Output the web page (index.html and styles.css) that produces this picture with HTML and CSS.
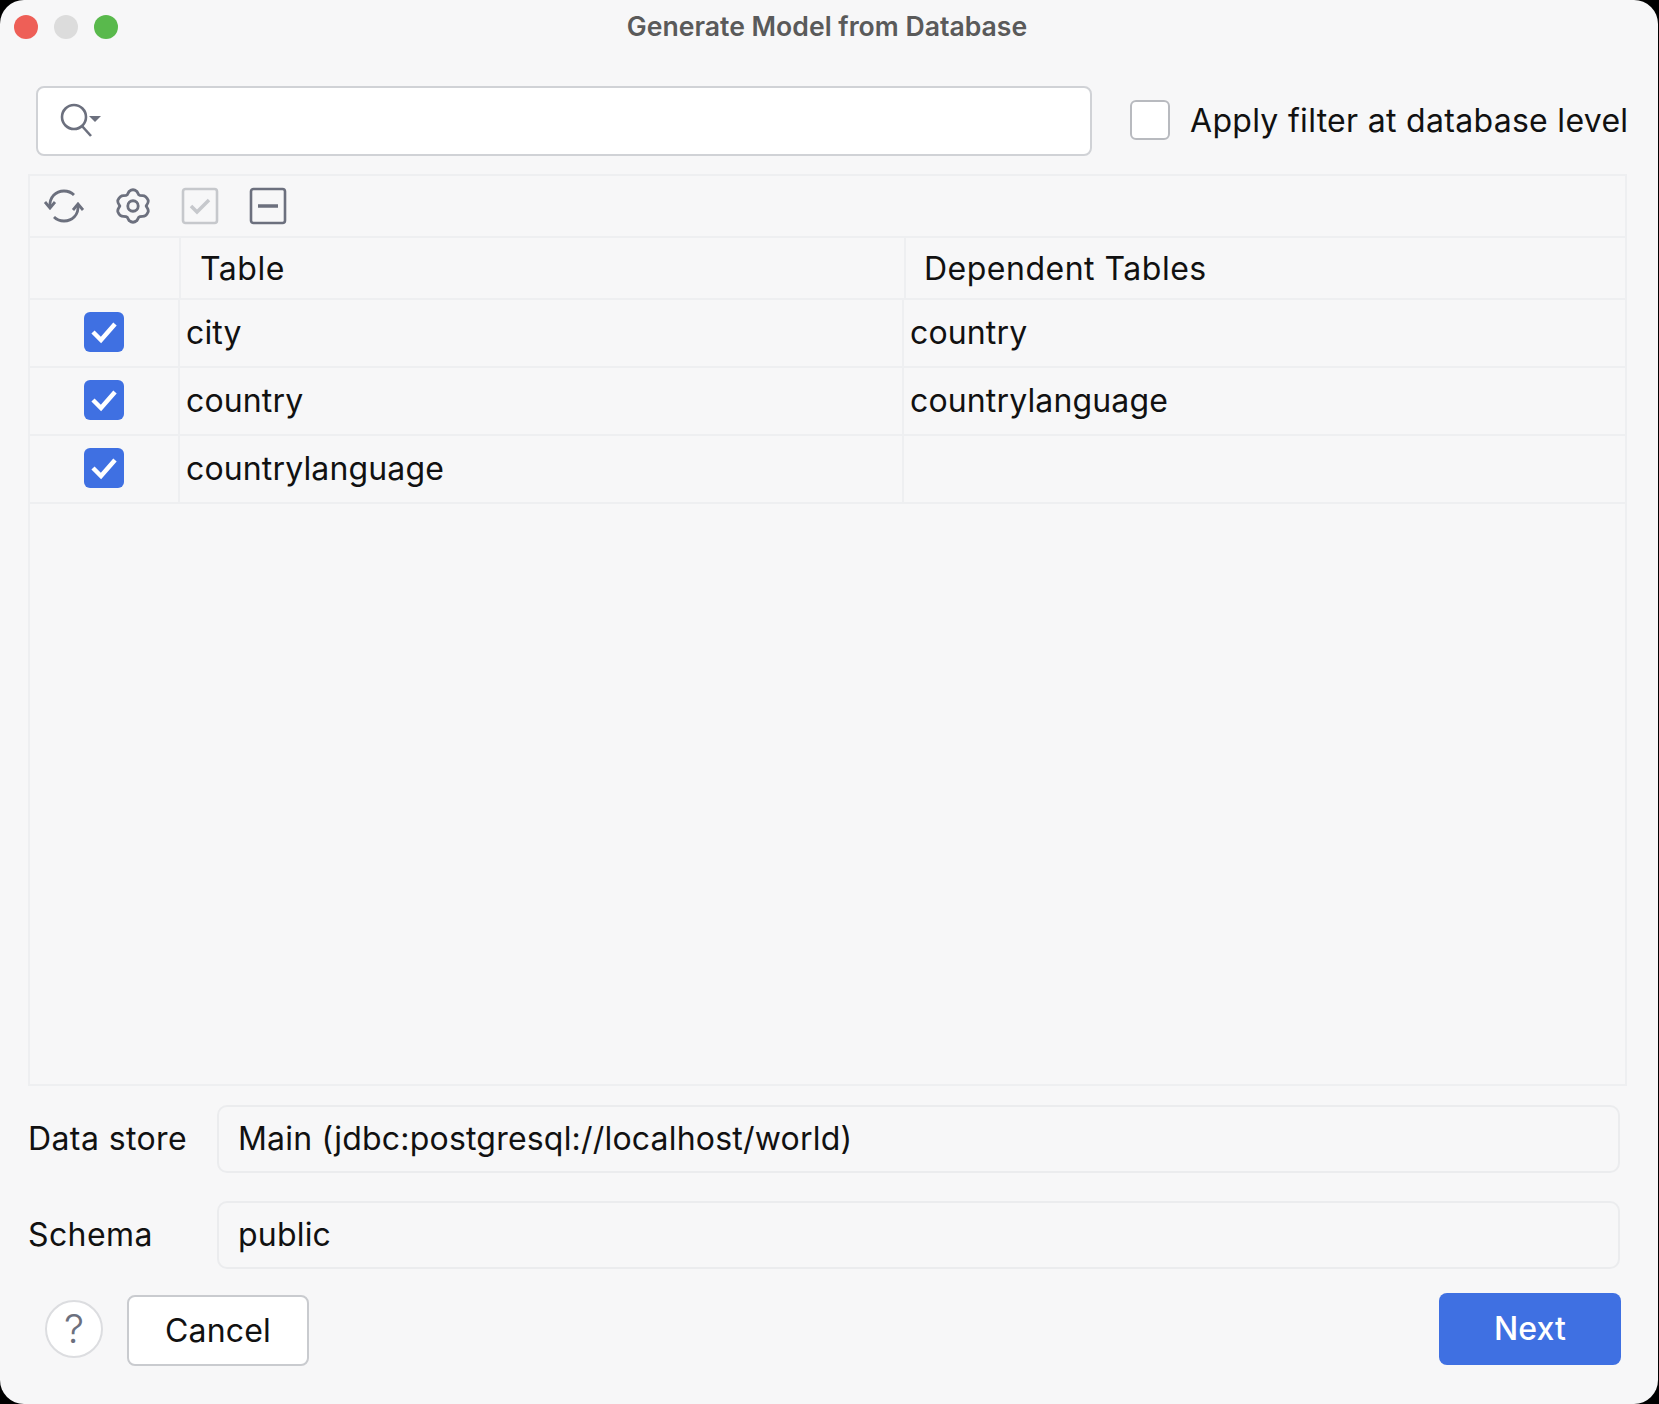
FILE: index.html
```html
<!DOCTYPE html>
<html lang="en">
<head>
    <meta charset="UTF-8">
    <title>Generate Model from Database</title>
    <link rel="stylesheet" href="styles.css">
</head>
<body>

<div class="window">
    <div class="titlebar">
        <div class="lights">
            <span class="light red"></span>
            <span class="light gray"></span>
            <span class="light green"></span>
        </div>
        <div class="title">Generate Model from Database</div>
        <div></div>
    </div>

    <div class="filter-row">
        <div class="search">
            <svg width="44" height="36" viewBox="0 0 44 36" fill="none" stroke="#6c707e" stroke-width="2.6">
                <circle cx="14" cy="14" r="12"/>
                <path d="M22 23l9 10"/>
                <path d="M29 13h12l-6 6z" fill="#6c707e" stroke="none"/>
            </svg>
        </div>
        <label class="apply-filter">
            <span class="checkbox"></span>
            Apply filter at database level
        </label>
    </div>

    <div class="panel">
        <div class="toolbar">
            <!-- refresh -->
            <svg class="tool" width="42" height="38" viewBox="0 0 42 38" fill="none" stroke="#6c707e" stroke-width="2.8">
                <path d="M7 20C6 10 13 4 21 4c5 0 8 2 10 4"/>
                <path d="M35 18c1 10-6 16-14 16-5 0-8-2-10-4"/>
                <path d="M2 15l5 6 5-6"/>
                <path d="M30 23l5-6 5 6"/>
            </svg>
            <!-- settings -->
            <svg class="tool" width="36" height="38" viewBox="-1 -1 38 40" fill="none" stroke="#6c707e" stroke-width="3" stroke-linejoin="round">
                <path d="M14 3.5c2.5-2 5.5-2 8 0l2 3.5c1 1 2.5 1 4 1 3 0 5 2.5 6 5 .5 2-.5 3.5-1.5 5-.5 .5-.5 1.5 0 2 1 1.5 2 3 1.5 5-1 2.5-3 5-6 5-1.5 0-3 0-4 1l-2 3.5c-2.5 2-5.5 2-8 0l-2-3.5c-1-1-2.5-1-4-1-3 0-5-2.5-6-5-.5-2 .5-3.5 1.5-5 .5-.5 .5-1.5 0-2-1-1.5-2-3-1.5-5 1-2.5 3-5 6-5 1.5 0 3 0 4-1z"/>
                <circle cx="18" cy="19" r="5.5"/>
            </svg>
            <!-- select all, disabled -->
            <svg class="tool" width="38" height="38" viewBox="0 0 38 38" fill="none" stroke="#c6c8cc" stroke-width="2.6">
                <rect x="2" y="2" width="34" height="34" rx="2.5"/>
                <path d="M10 19l6 6 12-12" stroke-width="3.5"/>
            </svg>
            <!-- unselect all -->
            <svg class="tool" width="38" height="38" viewBox="0 0 38 38" fill="none" stroke="#6c707e" stroke-width="2.6">
                <rect x="2" y="2" width="34" height="34" rx="2.5"/>
                <path d="M9 19h20" stroke-width="3.5"/>
            </svg>
        </div>

        <div class="row head">
            <div class="cell"></div>
            <div class="cell">Table</div>
            <div class="cell">Dependent Tables</div>
        </div>
        <div class="row">
            <div class="cell check-cell"><span class="checked"><svg width="40" height="40" viewBox="0 0 40 40" fill="none" stroke="#fff" stroke-width="4.5"><path d="M9 20l8 8 14-16"/></svg></span></div>
            <div class="cell">city</div>
            <div class="cell">country</div>
        </div>
        <div class="row">
            <div class="cell check-cell"><span class="checked"><svg width="40" height="40" viewBox="0 0 40 40" fill="none" stroke="#fff" stroke-width="4.5"><path d="M9 20l8 8 14-16"/></svg></span></div>
            <div class="cell">country</div>
            <div class="cell">countrylanguage</div>
        </div>
        <div class="row">
            <div class="cell check-cell"><span class="checked"><svg width="40" height="40" viewBox="0 0 40 40" fill="none" stroke="#fff" stroke-width="4.5"><path d="M9 20l8 8 14-16"/></svg></span></div>
            <div class="cell">countrylanguage</div>
            <div class="cell"></div>
        </div>
    </div>

    <div class="field">
        <div class="field-label">Data store</div>
        <div class="field-value">Main (jdbc:postgresql://localhost/world)</div>
    </div>
    <div class="field second">
        <div class="field-label">Schema</div>
        <div class="field-value">public</div>
    </div>

    <div class="footer">
        <div class="help">?</div>
        <button class="cancel-btn">Cancel</button>
        <button class="next-btn">Next</button>
    </div>
</div>

</body>
</html>
```

FILE: styles.css
```css
body {
    margin: 0;
    background-color: #000;
    font-family: Inter, "Noto Sans", sans-serif;
    font-size: 32px;
    letter-spacing: 0.14px;
    color: #111;
}

.window {
    width: 1658px;
    height: 1404px;
    box-sizing: border-box;
    padding: 0 31px 0 28px;
    background-color: #f7f7f8;
    border-radius: 24px;
    overflow: hidden;
}

.titlebar {
    display: grid;
    grid-template-columns: 1fr auto 1fr;
    align-items: center;
    height: 54px;
    margin: 0 -27px 0 -28px;
}

.lights {
    display: flex;
    gap: 16px;
    padding-left: 14px;
}

.light {
    width: 24px;
    height: 24px;
    border-radius: 50%;
}

.red { background-color: #ee5f57; }
.gray { background-color: #dcdcdc; }
.green { background-color: #59b94c; }

.title {
    padding-bottom: 2px;
    font-size: 26.6px;
    font-weight: 600;
    letter-spacing: 0;
    color: #5a5a5a;
}

.filter-row {
    display: flex;
    align-items: center;
    margin-top: 32px;
    padding-left: 8px;
}

.search {
    display: flex;
    flex: none;
    align-items: center;
    box-sizing: border-box;
    width: 1056px;
    height: 70px;
    padding-left: 22px;
    background-color: #fff;
    border: 2px solid #d0d2d6;
    border-radius: 8px;
}

.apply-filter {
    display: flex;
    align-items: center;
    gap: 20px;
    margin-left: 38px;
    padding-bottom: 2px;
    letter-spacing: 0.3px;
    white-space: nowrap;
}

.checkbox {
    width: 40px;
    height: 40px;
    box-sizing: border-box;
    background-color: #fff;
    border: 2px solid #b8babf;
    border-radius: 6px;
}

.panel {
    height: 912px;
    box-sizing: border-box;
    margin-top: 18px;
    border: 2px solid #eeeff1;
}

.toolbar {
    display: flex;
    align-items: center;
    gap: 30px;
    height: 60px;
    padding-left: 13px;
    border-bottom: 2px solid #eeeff1;
}

.row {
    display: grid;
    grid-template-columns: 150px 724px 1fr;
    height: 68px;
    box-sizing: border-box;
    border-bottom: 2px solid #eeeff1;
}

.cell {
    display: flex;
    align-items: center;
    padding: 0 0 2px 6px;
    border-right: 2px solid #eeeff1;
}

.cell:last-child {
    border-right: none;
}

.head {
    grid-template-columns: 151px 725px 1fr;
    height: 62px;
    letter-spacing: 0.5px;
}

.head .cell {
    padding: 0 0 0 19px;
}

.head .cell:last-child {
    padding-left: 18px;
}

.check-cell {
    justify-content: center;
    padding-left: 0;
}

.checked {
    display: flex;
    width: 40px;
    height: 40px;
    background-color: #3f70e2;
    border-radius: 6px;
}

.field {
    display: flex;
    align-items: center;
    margin-top: 19px;
}

.field.second {
    margin-top: 28px;
}

.field-label {
    width: 189px;
    padding-bottom: 2px;
    letter-spacing: 0.4px;
}

.field-value {
    display: flex;
    align-items: center;
    box-sizing: border-box;
    width: 1403px;
    height: 68px;
    padding: 0 0 2px 19px;
    border: 2px solid #ebecee;
    border-radius: 10px;
    letter-spacing: 0.2px;
}

.footer {
    display: flex;
    align-items: center;
    margin-top: 22px;
    padding: 0 6px 0 17px;
}

.help {
    width: 58px;
    height: 58px;
    box-sizing: border-box;
    margin-right: 24px;
    background-color: #fff;
    border: 2px solid #dcdde0;
    border-radius: 50%;
    color: #6c707e;
    line-height: 54px;
    text-align: center;
    font-size: 40px;
    font-weight: 300;
}

.cancel-btn {
    width: 182px;
    height: 71px;
    margin-top: 4px;
    background-color: #fff;
    border: 2px solid #c9cbcf;
    border-radius: 8px;
    color: #111;
    font-family: inherit;
    font-size: 32px;
    letter-spacing: 0.14px;
}

.next-btn {
    width: 182px;
    height: 72px;
    margin-left: auto;
    background-color: #3f70e2;
    border: none;
    border-radius: 8px;
    color: #fff;
    font-family: inherit;
    font-size: 32px;
    font-weight: 500;
    letter-spacing: 0.14px;
}
```
